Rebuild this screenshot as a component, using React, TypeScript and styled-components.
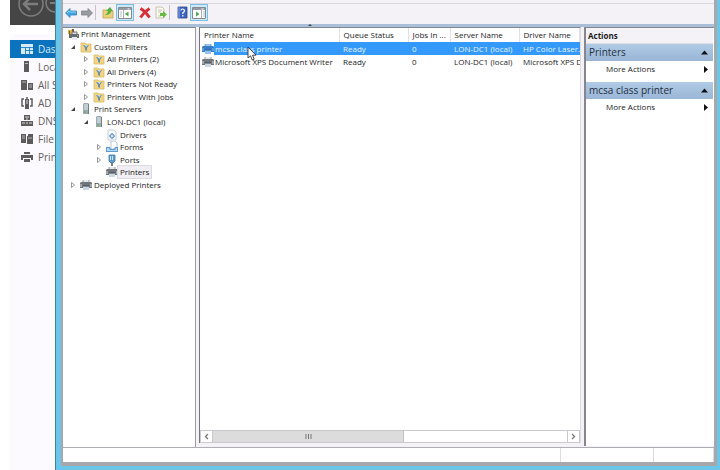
import React from "react";
import styled, { createGlobalStyle, css } from "styled-components";

const GlobalStyle = createGlobalStyle`
  *, *::before, *::after { box-sizing: border-box; }
  html, body, #root { height: 100%; }
  body {
    margin: 0;
    background: #fff;
    color: #1c1c1c;
    font: 8px/12px "Open Sans", "Noto Sans", sans-serif;
    overflow: hidden;
  }
  button { font: inherit; color: inherit; background: none; border: 0; padding: 0; margin: 0; }
  svg { display: block; flex: none; }
`;

/* ---------- layout ---------- */
const Desktop = styled.div`
  display: grid;
  grid-template-columns: 45px minmax(0, 1fr);
  height: 100vh;
  padding-left: 10px;
`;
const ServerManager = styled.aside`
  background: #fdfaff;
  overflow: hidden;
  min-width: 0;
`;
const Banner = styled.header`
  height: 25px;
  background: #454545;
  overflow: hidden;
`;
const BannerGap = styled.div`
  height: 9px;
  background: #fff;
`;
const ServerNav = styled.nav`
  display: flex;
  flex-direction: column;
  padding-top: 6px;
`;
const ServerLink = styled.a<{ $active?: boolean }>`
  display: flex;
  align-items: center;
  gap: 5px;
  height: 18px;
  padding-left: 11px;
  color: ${(p) => (p.$active ? "#d5ebfa" : "#606060")};
  background: ${(p) => (p.$active ? "#0b72bd" : "transparent")};
  font: 10px/18px "Open Sans", sans-serif;
  text-decoration: none;
  white-space: nowrap;
`;
const Frame = styled.main`
  display: flex;
  min-width: 0;
  background: #6ac7ea;
  border-left: 1px solid #47809c;
  padding: 0 3px 4px 5px;
`;
const Console = styled.div`
  flex: 1;
  min-width: 0;
  display: flex;
  flex-direction: column;
  border: solid #a6a8ab;
  border-width: 0 3px 4px 2px;
  background: #f5f2f7;
`;
const MenuEdge = styled.div`
  height: 4px;
  border-bottom: 1px solid #d9d7de;
`;
const Toolbar = styled.div`
  display: flex;
  align-items: center;
  height: 20px;
  padding-bottom: 3px;
`;
const ToolGroup = styled.div`
  display: flex;
  align-items: center;
  & + & { margin-left: 3px; }
`;
const ToolButton = styled.button<{ $pressed?: boolean }>`
  display: grid;
  place-items: center;
  width: ${(p) => (p.$pressed ? 18 : 16)}px;
  height: 17px;
  ${(p) =>
    p.$pressed &&
    css`
      background: #cfe9f8;
      border: 1px solid #79bfe6;
    `}
`;
const ToolSeparator = styled.span`
  width: 1px;
  height: 15px;
  margin-right: 4px;
  background: #c6c4cb;
`;
const Ribbon = styled.div`
  display: grid;
  place-items: start center;
  height: 3px;
  background: #a9c0d8;
  padding-right: 158px;
`;
const Panes = styled.div`
  flex: 1;
  min-height: 0;
  display: grid;
  grid-template-columns: 133px minmax(0, 1fr) 130px;
  column-gap: 3px;
`;
const paneEdge = css`
  min-width: 0;
  background: #fff;
  border-top: 1px solid #85868f;
`;
const TreePane = styled.section`
  ${paneEdge}
  border-right: 1px solid #9a9ba4;
`;
const ListPane = styled.section`
  ${paneEdge}
  display: flex;
  flex-direction: column;
  border-left: 1px solid #74757e;
  border-right: 1px solid #dddbe1;
  margin-bottom: 4px;
`;
const ActionsPane = styled.section`
  ${paneEdge}
  border-left: 2px solid #85868f;
  padding-right: 1px;
  margin-bottom: 1px;
`;

/* ---------- tree ---------- */
const Tree = styled.ul`
  display: grid;
  grid-auto-rows: 1fr;
  height: 163px;
  margin: 0;
  padding: 0;
  list-style: none;
`;
const TreeRow = styled.li<{ $level: number }>`
  display: flex;
  align-items: center;
  padding-left: ${(p) => (p.$level === 0 ? 4 : p.$level * 13 - 6)}px;
`;
const Twisty = styled.button`
  display: grid;
  place-items: center start;
  width: 10px;
  height: 10px;
`;
const TreeLabel = styled.button<{ $selected?: boolean }>`
  padding: 0 2px;
  white-space: nowrap;
  background: ${(p) => (p.$selected ? "#f0eef2" : "none")};
  outline: ${(p) => (p.$selected ? "1px solid #dcdae0" : "none")};
`;
const Indent = styled.span`
  width: 10px;
`;

/* ---------- list ---------- */
const TableArea = styled.div`
  flex: 1;
  min-height: 0;
  overflow: hidden;
`;
const PrinterTable = styled.table`
  width: 100%;
  table-layout: fixed;
  border-collapse: collapse;
`;
const HeadCell = styled.th<{ $width?: number }>`
  width: ${(p) => (p.$width ? `${p.$width}px` : "auto")};
  height: 14px;
  padding: 0 0 0 4px;
  border-right: 1px solid #e2e0e6;
  font-weight: 400;
  text-align: left;
  white-space: nowrap;
  overflow: hidden;
`;
const Row = styled.tr<{ $selected?: boolean }>`
  color: ${(p) => (p.$selected ? "#e6f3ff" : "inherit")};
  background: ${(p) =>
    p.$selected ? "linear-gradient(90deg, #fff 14px, #3399fb 14px)" : "none"};
`;
const Cell = styled.td`
  height: 13px;
  padding: 0 0 0 4px;
  white-space: nowrap;
  overflow: hidden;
`;
const NameCell = styled(Cell)`
  position: relative;
  padding-left: 2px;
  overflow: visible;
`;
const NameContent = styled.span`
  display: flex;
  align-items: center;
  gap: 1px;
`;
const Pointer = styled.span`
  position: absolute;
  left: 47px;
  top: 4px;
  z-index: 1;
`;
const ScrollBar = styled.div`
  display: flex;
  height: 13px;
  border: 1px solid #c9c8cd;
  background: #fff;
`;
const ScrollButton = styled.button`
  display: grid;
  place-items: center;
  width: 11px;
`;
const ScrollTrack = styled.div`
  flex: 1;
  border: solid #c9c8cd;
  border-width: 0 1px;
`;
const ScrollThumb = styled.div`
  display: grid;
  place-items: center;
  width: 54%;
  height: 100%;
  background: #dcdcdc;
  border-right: 1px solid #c0c0c0;
`;

/* ---------- actions ---------- */
const ActionsTitle = styled.h2`
  margin: 0;
  height: 16px;
  padding-left: 2px;
  background: #f5f2f7;
  border-bottom: 1px solid #e0dee5;
  font: 700 8px/16px "Open Sans", sans-serif;
`;
const ActionGroup = styled.button`
  display: flex;
  align-items: center;
  justify-content: space-between;
  width: 100%;
  height: 17px;
  padding: 0 5px 0 3px;
  background: linear-gradient(#b0cbe5, #9ab5d6);
  color: #23303f;
  font: 10px/17px "Open Sans", sans-serif;
`;
const ActionItem = styled.button`
  display: flex;
  align-items: center;
  justify-content: space-between;
  width: 100%;
  height: 16px;
  margin-bottom: 5px;
  padding: 0 5px 0 20px;
`;

const StatusBar = styled.footer`
  display: grid;
  grid-template-columns: minmax(0, 1fr) 93px 60px;
  height: 15px;
  background: #fff;
  border-top: 1px solid #aeadb4;
`;
const StatusCell = styled.div`
  border-right: 1px solid #dcdbe0;
`;

/* ---------- icons ---------- */
type IconName =
  | "root" | "filter" | "server" | "drivers" | "forms" | "ports" | "printer" | "bluePrinter";

function TreeIcon({ name }: { name: IconName }) {
  const size = { width: 12, height: 12, viewBox: "0 0 12 12" };
  switch (name) {
    case "root":
      return (
        <svg {...size}>
          <path d="M1 2h3l1-1 2 1v4H1z" fill="#e0b34f" />
          <path d="M2 3h1v7H2zM5 1h2v3H5z" fill="#6c6135" />
          <path d="M5 4h5v3H5z" fill="#d7dce3" stroke="#777" />
          <path d="M3 6h9v4H3z" fill="#686d75" />
          <path d="M5 9h5v3H5z" fill="#e8edf2" />
          <path d="M10 7h1v1h-1z" fill="#9bd16a" />
        </svg>
      );
    case "filter":
      return (
        <svg {...size}>
          <path d="M1 2h4l1 1h5v8H1z" fill="#f2d583" stroke="#d9b968" strokeWidth=".8" />
          <path d="M3 4h6L7 7v3L5 9V7z" fill="#6d8ea6" />
          <path d="M4 4h4L6.500 6z" fill="#c2dbe8" />
        </svg>
      );
    case "server":
      return (
        <svg {...size}>
          <path d="M3 1l1-1h4l1 1v10H3z" fill="#9aa9b2" />
          <path d="M4 2h4M4 4h4M4 6h4" stroke="#e9f1f4" />
          <path d="M4 8h2v2H4z" fill="#75b36c" />
          <path d="M8 1h1v10H8z" fill="#6f7e87" />
        </svg>
      );
    case "drivers":
      return (
        <svg {...size}>
          <path d="M2 1h6l2 2v8H2z" fill="#f7fafe" stroke="#bac3cf" strokeWidth=".8" />
          <circle cx="6" cy="7" r="2" fill="#cfe0f3" stroke="#5e8cc2" />
          <path d="M6 4v1M6 9v1M3 7h1M8 7h1" stroke="#5e8cc2" />
        </svg>
      );
    case "forms":
      return (
        <svg {...size}>
          <path d="M5 0h4l2 2v6H5z" fill="#fff" stroke="#a5b6c8" strokeWidth=".8" />
          <path d="M0 6h4l1 2h3l1-2h3v5H0z" fill="#5c9bd4" />
          <path d="M1 7h2l1 2h5l1-2h1v3H1z" fill="#b6d7f1" />
        </svg>
      );
    case "ports":
      return (
        <svg {...size}>
          <path d="M3 1h6v6L7 9H5L3 7z" fill="#5b9bd0" stroke="#447aa8" strokeWidth=".8" />
          <path d="M4 2h1v4H4zM6 2h1v4H6z" fill="#cce7f8" />
          <path d="M5 9h2v3H5z" fill="#71808d" />
        </svg>
      );
    default: {
      const blue = name === "bluePrinter";
      return (
        <svg {...size}>
          <path d="M3 1h6v4H3z" fill={blue ? "#9ac5ee" : "#e5e7eb"} />
          <path d="M3 1v3M9 1v3" stroke={blue ? "#5690ca" : "#858a91"} strokeWidth=".8" />
          <path d="M1 3h10l1 1v5H0V4z" fill={blue ? "#377cc5" : "#71757c"} />
          <path d="M0 5h2v3H0zM10 5h2v3h-2z" fill={blue ? "#609eda" : "#a4a8ae"} />
          <path d="M3 7h6v4H3z" fill={blue ? "#8fc3f5" : "#cbd7e3"} />
          <path d="M3 7h6" stroke={blue ? "#235a99" : "#3f444b"} />
        </svg>
      );
    }
  }
}

function TwistyIcon({ open }: { open: boolean }) {
  return (
    <svg width="6" height="8" viewBox="0 0 6 8">
      {open ? (
        <path d="M5 2v4H1z" fill="#444" />
      ) : (
        <path d="M1.500 1.500L4.500 4 1.500 6.500z" fill="#fff" stroke="#8b8b8b" strokeWidth=".9" />
      )}
    </svg>
  );
}

type ToolName = "back" | "forward" | "up" | "tree" | "delete" | "export" | "help" | "pane";

function ToolIcon({ name }: { name: ToolName }) {
  const size = { width: 14, height: 14, viewBox: "0 0 14 14" };
  switch (name) {
    case "back":
      return (
        <svg {...size}>
          <path d="M1.500 7L6 2.500V5h6.500v4H6v2.500z" fill="#43a5e2" stroke="#2c80bd" strokeWidth=".8" />
          <path d="M3 7l2-2v1h7" fill="none" stroke="#8fd0f5" />
        </svg>
      );
    case "forward":
      return (
        <svg {...size}>
          <path d="M12.500 7L8 2.500V5H1.500v4H8v2.500z" fill="#999ca0" stroke="#7d8084" strokeWidth=".8" />
        </svg>
      );
    case "up":
      return (
        <svg {...size}>
          <path d="M2 4h4l1 1h5v7H2z" fill="#ead17c" stroke="#c3a24d" strokeWidth=".8" />
          <path d="M4 9c1-1 3-2 3-4H5l4-4 3 4h-2c0 3-3 4-6 4z" fill="#57b043" />
        </svg>
      );
    case "delete":
      return (
        <svg {...size}>
          <path d="M2.500 2.500Q7 5 11.500 11.500M11.500 2.500Q6 6 2.500 11.500" fill="none" stroke="#d43137" strokeWidth="3" />
        </svg>
      );
    case "export":
      return (
        <svg {...size}>
          <path d="M2 1h6l2 2v9H2z" fill="#fcfbee" stroke="#b8b79d" strokeWidth=".8" />
          <path d="M4 4h4M4 6h3M4 10h3" stroke="#b8bba6" strokeWidth=".8" />
          <path d="M6 7h3V5l4 3.500L9 12v-2H6z" fill="#68b948" />
        </svg>
      );
    case "help":
      return (
        <svg {...size}>
          <path d="M3 1h9v11H3z" fill="#3f64bd" stroke="#2e468a" strokeWidth=".8" />
          <path d="M4 1v11" stroke="#8ca8e4" />
          <path d="M6 4.500Q6 3 7.500 3T9.500 4.500Q9.500 6 7.800 6.800V8M7.800 9v1.500" fill="none" stroke="#fff" strokeWidth="1.200" />
        </svg>
      );
    default: {
      const tree = name === "tree";
      return (
        <svg {...size}>
          <path d="M.5 1.500h13v11H.5z" fill="#fff" stroke="#83898f" />
          <path d="M1 2h12v2H1z" fill="#969ca5" />
          <path d="M9.500 3h2" stroke="#fff" />
          <path d={tree ? "M5.500 4v8" : "M9.500 4v8"} stroke="#a9aeb4" />
          <path d={tree ? "M2 6h2M2 8h2M2 10h2" : "M11 6h2M11 8h2M11 10h2"} stroke="#a9bccb" />
          <path d={tree ? "M10.500 5.500v5L7 8z" : "M4 5.500v5L7.500 8z"} fill="#4fa84b" />
        </svg>
      );
    }
  }
}

type ServerIconName = "dashboard" | "local" | "all" | "ad" | "dns" | "file" | "print";

const serverPaths: Record<ServerIconName, React.ReactNode> = {
  dashboard: (
    <>
      <path d="M0 1h12v10H0z" />
      <path d="M0 4.500h12M4.500 4v7M8.500 4v7M4 7.500h8" stroke="#0b72bd" strokeWidth=".8" />
    </>
  ),
  local: (
    <>
      <path d="M3 0h5v11H3z" />
      <path d="M4 2.500h3" stroke="#bbb" />
    </>
  ),
  all: (
    <>
      <path d="M0 1h6v10H0zM7 4h5v7H7z" />
      <path d="M1 3h4M8 6h3M8 8h3" stroke="#ccc" strokeWidth=".8" />
    </>
  ),
  ad: (
    <>
      <path d="M4 2h4v10H4z" />
      <path d="M3 2H1v7h2M9 2h2v7H9M6 0v2" fill="none" stroke="#5c5c5c" strokeWidth="1.500" />
      <path d="M5 4h2M5 6h2" stroke="#ddd" />
    </>
  ),
  dns: (
    <>
      <path d="M3 0h6v5H3zM0 6h12v5H0z" />
      <path d="M4 2h4M5 4h2M1 8h3M5 8h2M8 8h3" stroke="#d9d9d9" />
    </>
  ),
  file: (
    <>
      <path d="M0 1h5v9H0zM6 3h3V1h3v10H6z" />
      <path d="M1 3h3M1 5h3M7 5h4" stroke="#ccc" strokeWidth=".8" />
      <path d="M7 1h2v2H7z" />
    </>
  ),
  print: (
    <>
      <path d="M3 1h6v2H3zM0 4h12v5h-2V7H2v2H0zM3 8h6v3H3z" />
    </>
  ),
};

/* ---------- data ---------- */
const servers: { label: string; icon: ServerIconName }[] = [
  { label: "Dashboard", icon: "dashboard" },
  { label: "Local Server", icon: "local" },
  { label: "All Servers", icon: "all" },
  { label: "AD DS", icon: "ad" },
  { label: "DNS", icon: "dns" },
  { label: "File Services", icon: "file" },
  { label: "Print Services", icon: "print" },
];

const tree: { label: string; level: number; icon: IconName; open?: boolean; selected?: boolean }[] = [
  { label: "Print Management", level: 0, icon: "root" },
  { label: "Custom Filters", level: 1, icon: "filter", open: true },
  { label: "All Printers (2)", level: 2, icon: "filter", open: false },
  { label: "All Drivers (4)", level: 2, icon: "filter", open: false },
  { label: "Printers Not Ready", level: 2, icon: "filter", open: false },
  { label: "Printers With Jobs", level: 2, icon: "filter", open: false },
  { label: "Print Servers", level: 1, icon: "server", open: true },
  { label: "LON-DC1 (local)", level: 2, icon: "server", open: true },
  { label: "Drivers", level: 3, icon: "drivers" },
  { label: "Forms", level: 3, icon: "forms", open: false },
  { label: "Ports", level: 3, icon: "ports", open: false },
  { label: "Printers", level: 3, icon: "printer", selected: true },
  { label: "Deployed Printers", level: 1, icon: "printer", open: false },
];

const columns = [
  { label: "Printer Name", width: 139 },
  { label: "Queue Status", width: 69 },
  { label: "Jobs In ...", width: 42 },
  { label: "Server Name", width: 69 },
  { label: "Driver Name" },
];

const printers = [
  { name: "mcsa class printer", driver: "HP Color Laser...", selected: true },
  { name: "Microsoft XPS Document Writer", driver: "Microsoft XPS D", selected: false },
];

export default function App() {
  return (
    <>
      <GlobalStyle />
      <Desktop>
        <ServerManager>
          <Banner>
            <svg width="60" height="25" viewBox="0 0 60 25" fill="none" stroke="#7d7d7d">
              <circle cx="21" cy="4" r="12" strokeWidth="1.500" />
              <path d="M28 4H15M20 -2L14 4l6 6" strokeWidth="2.500" />
              <circle cx="45" cy="3" r="9" strokeWidth="1.500" />
              <path d="M40 3h10" strokeWidth="2" />
            </svg>
          </Banner>
          <BannerGap />
          <ServerNav aria-label="Server Manager">
            {servers.map((s, i) => (
              <ServerLink key={s.label} href="#" $active={i === 0}>
                <svg width="12" height="12" viewBox="0 0 12 12" fill={i === 0 ? "#d5ebfa" : "#5c5c5c"}>
                  {serverPaths[s.icon]}
                </svg>
                {s.label}
              </ServerLink>
            ))}
          </ServerNav>
        </ServerManager>

        <Frame>
          <Console>
            <MenuEdge />
            <Toolbar role="toolbar">
              <ToolGroup>
                <ToolButton aria-label="Back"><ToolIcon name="back" /></ToolButton>
                <ToolButton aria-label="Forward"><ToolIcon name="forward" /></ToolButton>
                <ToolSeparator />
                <ToolButton aria-label="Up one level"><ToolIcon name="up" /></ToolButton>
                <ToolButton aria-label="Show console tree" $pressed><ToolIcon name="tree" /></ToolButton>
              </ToolGroup>
              <ToolGroup>
                <ToolButton aria-label="Delete"><ToolIcon name="delete" /></ToolButton>
                <ToolButton aria-label="Export list"><ToolIcon name="export" /></ToolButton>
                <ToolSeparator />
                <ToolButton aria-label="Help"><ToolIcon name="help" /></ToolButton>
                <ToolButton aria-label="Show action pane" $pressed><ToolIcon name="pane" /></ToolButton>
              </ToolGroup>
            </Toolbar>
            <Ribbon>
              <svg width="4" height="2" viewBox="0 0 4 2"><path d="M0 2l2-2 2 2z" fill="#444" /></svg>
            </Ribbon>
            <Panes>
              <TreePane>
                <Tree role="tree">
                  {tree.map((n) => (
                    <TreeRow key={n.label} $level={n.level} role="treeitem" aria-selected={!!n.selected}>
                      {n.level > 0 &&
                        (n.open === undefined ? (
                          <Indent />
                        ) : (
                          <Twisty aria-label={`Toggle ${n.label}`}>
                            <TwistyIcon open={n.open} />
                          </Twisty>
                        ))}
                      <TreeIcon name={n.icon} />
                      <TreeLabel $selected={n.selected}>{n.label}</TreeLabel>
                    </TreeRow>
                  ))}
                </Tree>
              </TreePane>

              <ListPane>
                <TableArea>
                  <PrinterTable>
                    <thead>
                      <tr>
                        {columns.map((c) => (
                          <HeadCell key={c.label} $width={c.width} scope="col">{c.label}</HeadCell>
                        ))}
                      </tr>
                    </thead>
                    <tbody>
                      {printers.map((p) => (
                        <Row key={p.name} $selected={p.selected}>
                          <NameCell>
                            <NameContent>
                              <TreeIcon name={p.selected ? "bluePrinter" : "printer"} />
                              {p.name}
                            </NameContent>
                            {p.selected && (
                              <Pointer>
                                <svg width="10" height="15" viewBox="0 0 10 15">
                                  <path d="M1 1v11l2.500-2.200L5.200 14l2-.8L5.500 9.200H9z" fill="#fff" stroke="#333" strokeWidth=".9" />
                                </svg>
                              </Pointer>
                            )}
                          </NameCell>
                          <Cell>Ready</Cell>
                          <Cell>0</Cell>
                          <Cell>LON-DC1 (local)</Cell>
                          <Cell>{p.driver}</Cell>
                        </Row>
                      ))}
                    </tbody>
                  </PrinterTable>
                </TableArea>
                <ScrollBar>
                  <ScrollButton aria-label="Scroll left">
                    <svg width="5" height="7" viewBox="0 0 5 7"><path d="M4 1L1.500 3.500 4 6" fill="none" stroke="#777" strokeWidth="1.300" /></svg>
                  </ScrollButton>
                  <ScrollTrack>
                    <ScrollThumb>
                      <svg width="7" height="5" viewBox="0 0 7 5"><path d="M1 0v5M3.500 0v5M6 0v5" stroke="#777" /></svg>
                    </ScrollThumb>
                  </ScrollTrack>
                  <ScrollButton aria-label="Scroll right">
                    <svg width="5" height="7" viewBox="0 0 5 7"><path d="M1 1l2.500 2.500L1 6" fill="none" stroke="#777" strokeWidth="1.300" /></svg>
                  </ScrollButton>
                </ScrollBar>
              </ListPane>

              <ActionsPane>
                <ActionsTitle>Actions</ActionsTitle>
                {["Printers", "mcsa class printer"].map((g) => (
                  <React.Fragment key={g}>
                    <ActionGroup>
                      {g}
                      <svg width="7" height="5" viewBox="0 0 7 5"><path d="M0 4.500L3.500 .5 7 4.500z" fill="#111" /></svg>
                    </ActionGroup>
                    <ActionItem>
                      More Actions
                      <svg width="5" height="7" viewBox="0 0 5 7"><path d="M1 0l4 3.500L1 7z" fill="#111" /></svg>
                    </ActionItem>
                  </React.Fragment>
                ))}
              </ActionsPane>
            </Panes>
            <StatusBar>
              <StatusCell />
              <StatusCell />
              <StatusCell />
            </StatusBar>
          </Console>
        </Frame>
      </Desktop>
    </>
  );
}
